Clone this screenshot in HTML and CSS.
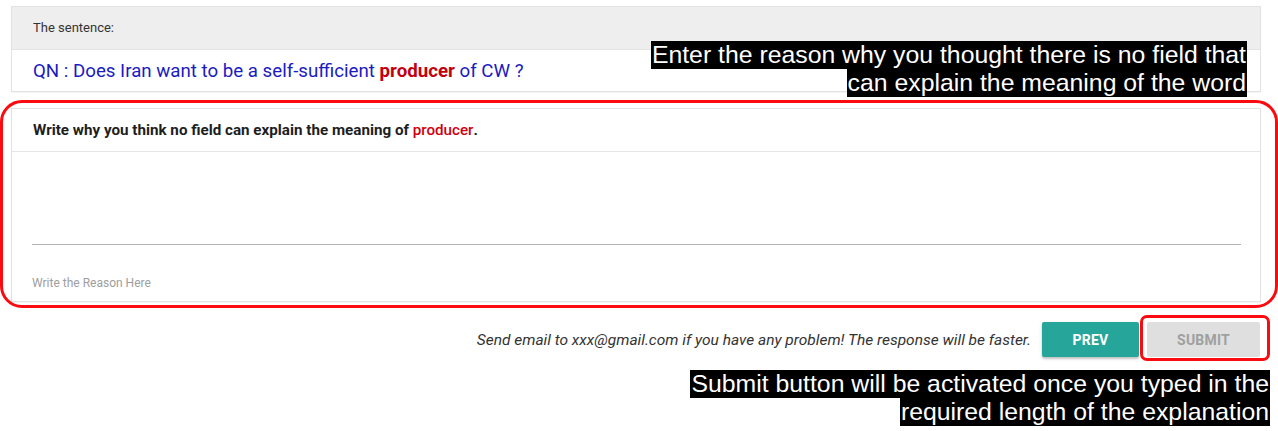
FILE: index.html
```html
<!DOCTYPE html>
<html>
<head>
<meta charset="utf-8">
<link rel="stylesheet" href="styles.css">
</head>
<body>
<div class="page">
  <section class="card">
    <div class="card-head">The sentence:</div>
    <div class="card-body sentence">QN : Does Iran want to be a self-sufficient <b class="word">producer</b> of CW ?</div>
  </section>

  <section class="card reason">
    <div class="card-head reason-head">Write why you think no field can explain the meaning of <span class="word-red">producer</span>.</div>
    <div class="reason-body">
      <div class="field"></div>
      <div class="hint">Write the Reason Here</div>
    </div>
  </section>

  <div class="actions">
    <span class="note">Send email to xxx@gmail.com if you have any problem! The response will be faster.</span>
    <button class="btn btn-prev">PREV</button>
    <button class="btn btn-submit">SUBMIT</button>
  </div>

  <div class="ring ring-reason"></div>
  <div class="ring ring-submit"></div>

  <div class="callout callout-top">
    <span>Enter the reason why you thought there is no field that</span>
    <span>can explain the meaning of the word</span>
  </div>
  <div class="callout callout-bottom">
    <span>Submit button will be activated once you typed in the</span>
    <span>required length of the explanation</span>
  </div>
</div>
</body>
</html>
```

FILE: styles.css
```css
html, body {
  margin: 0;
  padding: 0;
  background: #ffffff;
}

.page {
  position: relative;
  width: 1278px;
  height: 431px;
  box-sizing: border-box;
  padding: 6px 17px 0 11px;
  font-family: Roboto, "Liberation Sans", sans-serif;
  color: #333;
  overflow: hidden;
}

.card {
  border: 1px solid #e2e2e2;
  background: #fff;
  box-shadow: 0 1px 1px rgba(0,0,0,0.04);
}

.card-head {
  height: 42px;
  line-height: 42px;
  padding: 0 21px;
  background: #eeeeee;
  border-bottom: 1px solid #e4e4e4;
  font-size: 13px;
  color: #333;
  white-space: nowrap;
}

.card-body {
  height: 40px;
  line-height: 40px;
  padding: 1px 21px 0;
  white-space: nowrap;
}

.sentence {
  font-size: 18.7px;
  color: #1b1bc2;
}

.word {
  color: #c4000f;
  font-weight: 700;
}

.reason {
  margin-top: 16px;
}

.reason-head {
  background: #fff;
  height: 41px;
  line-height: 41px;
  padding-top: 1px;
  font-size: 15.2px;
  font-weight: 700;
  color: #1e1e1e;
  border-bottom: 1px solid #e6e6e6;
}

.word-red {
  color: #d0000f;
  font-weight: 500;
}

.reason-body {
  padding: 0 19px 11px 20px;
}

.field {
  height: 92px;
  border-bottom: 1px solid #b4b4b4;
}

.hint {
  margin-top: 31px;
  font-size: 12px;
  line-height: 14px;
  color: #9e9e9e;
}

.actions {
  display: flex;
  justify-content: flex-end;
  align-items: center;
  margin-top: 20px;
  padding-right: 1px;
}

.note {
  font-size: 15.5px;
  font-style: italic;
  color: #333;
  margin-right: 11px;
  white-space: nowrap;
}

.btn {
  height: 35px;
  border: none;
  border-radius: 2px;
  font-family: Roboto, "Liberation Sans", sans-serif;
  font-size: 14px;
  font-weight: 700;
  letter-spacing: 0.2px;
  padding: 0;
}

.btn-prev {
  width: 97px;
  background: #26a69a;
  color: #fff;
  box-shadow: 0 2px 2px rgba(0,0,0,0.18), 0 1px 4px rgba(0,0,0,0.1);
}

.btn-submit {
  width: 113px;
  margin-left: 8px;
  background: #dfdfdf;
  color: #9f9f9f;
}

.ring {
  position: absolute;
  box-sizing: border-box;
  border: 3px solid #fb0a0f;
}

.ring-reason {
  left: 0;
  top: 100px;
  width: 1278px;
  height: 208px;
  border-radius: 22px;
}

.ring-submit {
  left: 1140px;
  top: 315px;
  width: 130px;
  height: 46px;
  border-radius: 7px;
}

.callout {
  position: absolute;
  display: flex;
  flex-direction: column;
  align-items: flex-end;
  font-family: "Liberation Sans", Arial, sans-serif;
  font-size: 24.8px;
  line-height: 28px;
  color: #fff;
}

.callout span {
  display: block;
  background: #000;
  padding: 0 1px;
}

.callout-top {
  right: 31px;
  top: 41px;
}

.callout-bottom {
  right: 8px;
  top: 370px;
}
```
